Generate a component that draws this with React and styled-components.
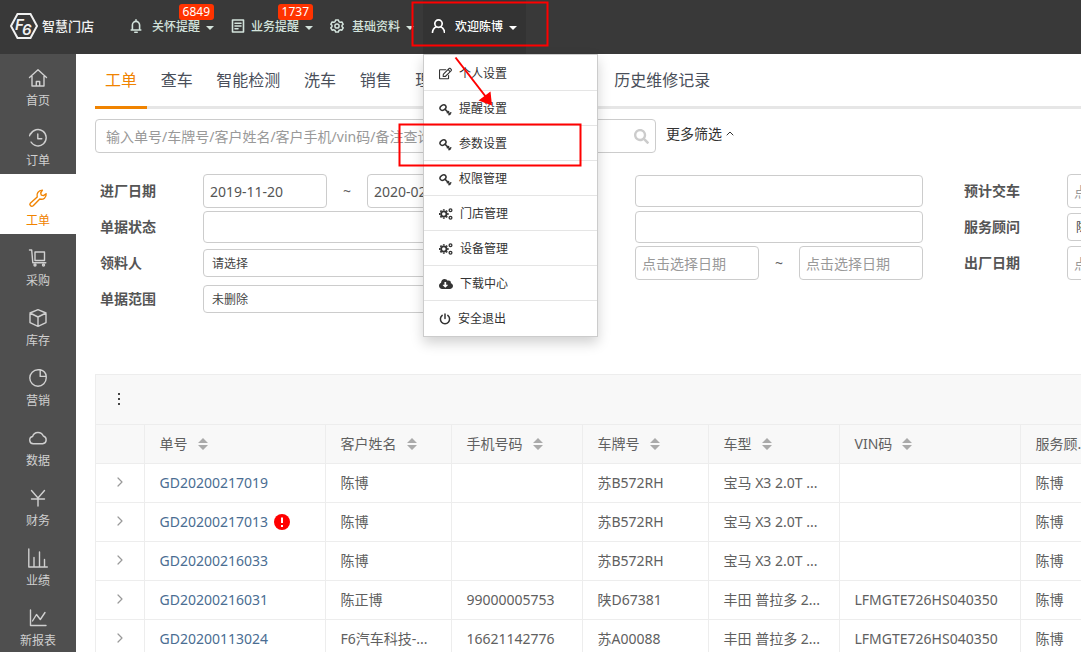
import React from 'react';
import styled, { createGlobalStyle } from 'styled-components';
import { FaRegEdit, FaCloudDownloadAlt, FaSearch } from 'react-icons/fa';

const GlobalStyle = createGlobalStyle`
  * {
    box-sizing: border-box;
  }

  body {
    margin: 0;
    background: #fff;
    color: #606060;
    font-family: 'Noto Sans', 'Noto Sans CJK SC', sans-serif;
    font-size: 14px;
    line-height: 20px;
  }

  button, input, select {
    font-family: inherit;
  }

  a {
    color: inherit;
    text-decoration: none;
  }
`;

const Page = styled.div`
  position: relative;
  display: flex;
  flex-direction: column;
  height: 100vh;
  overflow: hidden;
`;

/* ---------- top bar ---------- */

const TopBar = styled.header`
  flex: none;
  display: flex;
  height: 54px;
  background: #393939;
`;

const Brand = styled.a`
  display: flex;
  align-items: center;
  gap: 4px;
  width: 122px;
  height: 51px;
  padding-left: 10px;
  color: #f2f2f2;
  font-size: 13px;
  font-weight: 500;
`;

const TopNav = styled.nav`
  display: flex;
`;

const NavItem = styled.div`
  position: relative;
  background: ${({ $open }) => ($open ? '#333' : 'transparent')};
`;

const NavButton = styled.button`
  display: flex;
  align-items: center;
  height: 54px;
  padding: 0 9px 0 8px;
  border: 0;
  background: none;
  color: ${({ $open }) => ($open ? '#fff' : '#d3e3dc')};
  font-size: 12px;
  font-weight: 500;
  line-height: 20px;
  white-space: nowrap;
`;

const NavIcon = styled.span`
  display: flex;
  width: ${({ $width }) => $width}px;
  padding-bottom: 3px;
`;

const Caret = styled.span`
  margin-top: 2px;
  margin-left: 6px;
  border: 4px solid transparent;
  border-top-color: currentColor;
  border-bottom: 0;
`;

const Badge = styled.span`
  position: absolute;
  top: 4px;
  right: 9px;
  padding: 0 4px;
  border-radius: 3px;
  background: #f30;
  color: #fff;
  font-size: 12px;
  line-height: 16px;
`;

const Menu = styled.ul`
  position: absolute;
  z-index: 10;
  top: 54px;
  left: 0;
  width: 175px;
  margin: 0;
  padding: 0 0 1px;
  border: 1px solid #ccc;
  background: #fff;
  box-shadow: 0 6px 12px rgba(0, 0, 0, 0.18);
  list-style: none;
`;

const MenuItem = styled.li`
  height: 35px;

  & + & {
    border-top: 1px solid #e5e5e5;
  }
`;

const MenuLink = styled.a`
  display: flex;
  align-items: center;
  gap: 7px;
  height: 100%;
  padding-top: 2px;
  padding-left: 15px;
  color: #333;
  font-size: 12px;
`;

/* ---------- side bar ---------- */

const Body = styled.div`
  flex: 1;
  display: flex;
  min-height: 0;
`;

const Sidebar = styled.nav`
  flex: none;
  width: 76px;
  overflow: hidden;
  background: #4f4f4f;
`;

const SideLink = styled.a`
  display: flex;
  flex-direction: column;
  align-items: center;
  gap: 3px;
  height: 60px;
  padding-top: 14px;
  background: ${({ $active }) => ($active ? '#fff' : 'transparent')};
  color: ${({ $active }) => ($active ? '#f08300' : '#d0d0d0')};
  font-size: 12px;
`;

/* ---------- content ---------- */

const Main = styled.main`
  flex: 1;
  min-width: 0;
  padding-left: 19px;
  overflow: hidden;
`;

const Tabs = styled.nav`
  height: 55px;
  border-bottom: 3px solid #e6e6e6;
  white-space: nowrap;
`;

const Tab = styled.a`
  display: inline-block;
  height: 55px;
  padding: 0 10px;
  border-bottom: 3px solid ${({ $active }) => ($active ? '#f08300' : 'transparent')};
  color: ${({ $active }) => ($active ? '#f08300' : '#4a4f5a')};
  font-size: 16px;
  line-height: 52px;
`;

const SearchRow = styled.div`
  display: flex;
  gap: 10px;
  margin-top: 10px;
`;

const SearchBox = styled.form`
  display: flex;
  align-items: center;
  width: 561px;
  height: 34px;
  padding: 0 6px 0 10px;
  border: 1px solid #ccc;
  border-radius: 4px;
`;

const SearchInput = styled.input`
  flex: 1;
  min-width: 0;
  padding: 0;
  border: 0;
  outline: 0;
  font-size: 14px;

  &::placeholder {
    color: #999;
  }
`;

const IconButton = styled.button`
  display: inline-flex;
  align-items: center;
  justify-content: center;
  padding: 0;
  border: 0;
  background: none;
  color: ${({ $color }) => $color};
`;

const MoreButton = styled.button`
  display: flex;
  align-items: center;
  gap: 4px;
  height: 28px;
  padding: 0;
  border: 0;
  background: none;
  color: #333;
  font-size: 14px;
`;

const Filters = styled.form`
  display: grid;
  grid-template-columns: repeat(3, 432px);
  grid-auto-rows: 36px;
  margin-top: 20px;
  padding-left: 5px;
`;

const Field = styled.div`
  grid-column: ${({ $column }) => $column};
  display: flex;
  align-items: center;
`;

const FieldLabel = styled.label`
  width: 103px;
  color: #555;
  font-weight: 700;
`;

const Control = styled.div`
  display: flex;
  align-items: center;
  justify-content: space-between;
  width: 288px;
`;

const TextInput = styled.input`
  width: 100%;
  height: 32px;
  padding: 0 6px;
  border: 1px solid #ccc;
  border-radius: 4px;
  color: #555;
  font-size: 14px;

  &::placeholder {
    color: #999;
  }
`;

const DateInput = styled(TextInput)`
  width: 124px;
  height: 34px;
`;

const Select = styled.select`
  appearance: none;
  width: 100%;
  height: 28px;
  padding: 0 8px;
  border: 1px solid #ccc;
  border-radius: 4px;
  background: #fff;
  color: #444;
  font-size: 12px;
`;

const Panel = styled.section`
  margin-top: 57px;
  border: 1px solid #ededed;
  border-right: 0;
`;

const PanelBar = styled.div`
  display: flex;
  align-items: center;
  height: 49px;
  padding-left: 15px;
  background: #f8f8f8;
`;

const Table = styled.table`
  width: 1050px;
  table-layout: fixed;
  border-collapse: collapse;
`;

const cell = `
  height: 39px;
  padding: 0 0 0 15px;
  border-top: 1px solid #ededed;
  border-left: 1px solid #ededed;
  text-align: left;
  font-weight: 400;
  white-space: nowrap;

  &:first-child {
    padding: 0;
    border-left: 0;
    text-align: center;
  }
`;

const Th = styled.th`
  ${cell}
  background: #f8f8f8;
  color: #606060;
`;

const Td = styled.td`
  ${cell}
`;

const CellInner = styled.span`
  display: flex;
  align-items: center;
  gap: ${({ $gap }) => $gap}px;
`;

const OrderLink = styled.a`
  color: #4a6d92;
`;

const Marks = styled.svg`
  position: absolute;
  z-index: 20;
  top: 0;
  left: 0;
  pointer-events: none;
`;

/* ---------- icons ---------- */

const Line = ({ size = 20, width = 1.4, view = 20, children }) => (
  <svg
    width={size}
    height={size}
    viewBox={`0 0 ${view} ${view}`}
    fill="none"
    stroke="currentColor"
    strokeWidth={width}
    strokeLinecap="round"
    strokeLinejoin="round"
    aria-hidden="true"
  >
    {children}
  </svg>
);

const BellIcon = () => (
  <Line size={14} view={14} width={1.6}>
    <path d="M1.2 11h9.6M2.4 11V6a3.6 3.6 0 0 1 7.2 0v5M6 .8v1.4M4.8 13.2h2.4" />
  </Line>
);

const NoteIcon = () => (
  <Line size={14} view={14} width={1.6}>
    <path d="M1.500 1h11v12h-11zM4 4.200h6M4 7h6M4 9.800h3" />
  </Line>
);

const GearIcon = () => (
  <Line size={14} view={14} width={1.5}>
    <path d="M5.6.9h2.8l.5 1.7 1.2.7 1.8-.4 1.3 2.4L12 6.4v1.2l1.2 1.2-1.3 2.4-1.8-.4-1.2.7-.5 1.6H5.6l-.5-1.6-1.2-.7-1.8.4L.8 8.800 2 7.600V6.400L.8 5.300l1.300-2.400 1.800.4 1.200-.7z" />
    <circle cx="7" cy="7" r="2.1" />
  </Line>
);

const UserIcon = () => (
  <Line size={14} view={14} width={1.7}>
    <circle cx="7.500" cy="4.600" r="3.700" />
    <path d="M5.400 7.800c-2.300 1-3.700 2.800-3.900 5.500M9.600 7.800c2.300 1 3.700 2.800 3.900 5.500" />
  </Line>
);

const EditIcon = () => <FaRegEdit size={13} />;

const KeyIcon = () => (
  <Line size={13} view={13} width={1.5}>
    <ellipse cx="4" cy="4.6" rx="3.2" ry="2.4" transform="rotate(-35 4 4.6)" />
    <path d="M6.2 6.400 11 11.200M8.300 9.800l1.300-1.300M10 11.600l1.800-1.800" />
  </Line>
);

const CogsIcon = () => (
  <Line size={14} view={14} width={1.8}>
    <circle cx="4.800" cy="7" r="2.700" />
    <path
      d="M4.800 2.200v1.400M4.800 10.400v1.400M0 7h1.400M8.200 7h1.400M1.400 3.600l1 1M7.200 9.400l1 1M8.200 3.600l-1 1M2.400 9.400l-1 1"
      strokeLinecap="butt"
    />
    <circle cx="11.500" cy="3.200" r="1.400" strokeWidth="1.300" />
    <circle cx="11.500" cy="10.800" r="1.400" strokeWidth="1.300" />
  </Line>
);

const DownloadIcon = () => <FaCloudDownloadAlt size={14} />;

const PowerIcon = () => (
  <Line size={12} view={12} width={1.5}>
    <path d="M6 1v4.500M3.200 2.400a4.600 4.600 0 1 0 5.600 0" />
  </Line>
);

const sideIcons = {
  home: <path d="M1.5 9.5 10 1.8l8.5 7.7M4 8v10h12V8M8.3 18v-4.5h3.4V18" />,
  clock: <path d="M2.6 6.2A8.2 8.2 0 1 1 3 14M1.6 7.8l.8-2.4M9.8 6v4.8h4" />,
  wrench: <path d="M2.3 15.2 9.2 8.9C8.3 5.5 10.3 2.3 14.4 2.1L12.7 4.9l.6 2.2 2.2.5 2.6-1.9c.5 3.9-2.7 6.3-6.3 5.3l-6.600 6.800c-1.900 1.400-4.300-.7-2.900-2.600z" />,
  cart: (
    <>
      <path d="M1.5 2h2.2l1.1 12.8h13M7 4h9.5v8.5H7z" />
      <circle cx="7" cy="17" r="1" />
      <circle cx="15.5" cy="17" r="1" />
    </>
  ),
  box: <path d="M10 1.6 18 5v9.6l-8 3.8-8-3.8V5zM2 5l8 4 8-4M10 9v9.4" />,
  pie: <path d="M10 1.8a8.2 8.2 0 1 0 8.2 8.2M12.2 1.800a7.500 7.500 0 0 1 6 6.600h-6zM10 1.800h2.200M18.200 8.400V10" />,
  cloud: <path d="M5.2 15.8a3.7 3.7 0 0 1-.6-7.3A5.7 5.7 0 0 1 15.3 8a4 4 0 0 1-.6 7.8z" />,
  yuan: <path d="M3.5 2.5 10 10l6.5-7.5M3.5 11h13M10 10v8" />,
  bars: <path d="M.8 1v18h18.5M6 18.5v-9M11.5 18.5V4M16.5 18.5v-7" />,
  chart: <path d="M2.5 2v15.5H18M4.5 13l4-6.5 3.8 5 4.7-7" />,
};

const Sorter = () => (
  <svg width="10" height="12" viewBox="0 0 10 12" fill="#aaa" aria-hidden="true">
    <path d="M5 0l5 5H0zM5 12l5-5H0z" />
  </svg>
);

const AlertIcon = () => (
  <svg width="16" height="16" viewBox="0 0 16 16" role="img" aria-label="异常">
    <circle cx="8" cy="8" r="8" fill="#f00" />
    <path d="M8 3.5v5.500M8 11v2" stroke="#fff" strokeWidth="2" />
  </svg>
);

/* ---------- data ---------- */

const navItems = [
  { label: '关怀提醒', icon: <BellIcon />, width: 22, badge: 6849 },
  { label: '业务提醒', icon: <NoteIcon />, width: 20, badge: 1737 },
  { label: '基础资料', icon: <GearIcon />, width: 22 },
  { label: '欢迎陈博', icon: <UserIcon />, width: 24, open: true },
];

const menuItems = [
  ['个人设置', EditIcon],
  ['提醒设置', KeyIcon],
  ['参数设置', KeyIcon],
  ['权限管理', KeyIcon],
  ['门店管理', CogsIcon],
  ['设备管理', CogsIcon],
  ['下载中心', DownloadIcon],
  ['安全退出', PowerIcon],
];

const sideItems = [
  ['首页', 'home'],
  ['订单', 'clock'],
  ['工单', 'wrench'],
  ['采购', 'cart'],
  ['库存', 'box'],
  ['营销', 'pie'],
  ['数据', 'cloud'],
  ['财务', 'yuan'],
  ['业绩', 'bars'],
  ['新报表', 'chart'],
];

const tabs = ['工单', '查车', '智能检测', '洗车', '销售', '理赔', '会员', '服务套餐', '历史维修记录'];

const filters = [
  { label: '进厂日期', type: 'dates', values: ['2019-11-20', '2020-02-18'] },
  { label: '工单类型', type: 'text' },
  { label: '预计交车', type: 'dates' },
  { label: '单据状态', type: 'text' },
  { label: '业务分类', type: 'text' },
  { label: '服务顾问', type: 'select', value: '陈博' },
  { label: '领料人', type: 'select', value: '请选择' },
  { label: '结算日期', type: 'dates' },
  { label: '出厂日期', type: 'dates' },
  { label: '单据范围', type: 'select', value: '未删除' },
];

const columns = [
  ['单号', 181],
  ['客户姓名', 126],
  ['手机号码', 131],
  ['车牌号', 126],
  ['车型', 131],
  ['VIN码', 181],
  ['服务顾...', 126],
];

const orders = [
  ['GD20200217019', '陈博', '', '苏B572RH', '宝马 X3 2.0T ...', '', '陈博'],
  ['GD20200217013', '陈博', '', '苏B572RH', '宝马 X3 2.0T ...', '', '陈博'],
  ['GD20200216033', '陈博', '', '苏B572RH', '宝马 X3 2.0T ...', '', '陈博'],
  ['GD20200216031', '陈正博', '99000005753', '陕D67381', '丰田 普拉多 2...', 'LFMGTE726HS040350', '陈博'],
  ['GD20200113024', 'F6汽车科技-...', '16621142776', '苏A00088', '丰田 普拉多 2...', 'LFMGTE726HS040350', '陈博'],
];

const alerted = ['GD20200217013'];

const FilterField = ({ id, label, type, value, values = [], column }) => (
  <Field $column={column}>
    <FieldLabel htmlFor={id}>{label}</FieldLabel>
    <Control>
      {type === 'dates' && (
        <>
          <DateInput id={id} placeholder="点击选择日期" defaultValue={values[0]} />
          <span>~</span>
          <DateInput aria-label={`${label}止`} placeholder="点击选择日期" defaultValue={values[1]} />
        </>
      )}
      {type === 'text' && <TextInput id={id} />}
      {type === 'select' && (
        <Select id={id}>
          <option>{value}</option>
        </Select>
      )}
    </Control>
  </Field>
);

const App = () => {
  return (
    <Page>
      <GlobalStyle />
      <TopBar>
        <Brand href="#">
          <svg width="28" height="26" viewBox="0 0 28 26" aria-hidden="true">
            <path d="M7.5 1h13L27 13l-6.500 12h-13L1 13z" fill="none" stroke="#f2f2f2" strokeWidth="2" />
            <g fill="#f2f2f2" fontFamily="Inter, sans-serif" fontSize="15" fontStyle="italic" fontWeight="600">
              <text x="5" y="17">F</text>
              <text x="12" y="22">6</text>
            </g>
          </svg>
          智慧门店
        </Brand>
        <TopNav>
          {navItems.map((item) => (
            <NavItem key={item.label} $open={item.open}>
              <NavButton type="button" $open={item.open}>
                <NavIcon $width={item.width}>{item.icon}</NavIcon>
                {item.label}
                <Caret />
              </NavButton>
              {item.badge && <Badge>{item.badge}</Badge>}
              {item.open && (
                <Menu>
                  {menuItems.map(([label, Icon]) => (
                    <MenuItem key={label}>
                      <MenuLink href="#"><Icon />{label}</MenuLink>
                    </MenuItem>
                  ))}
                </Menu>
              )}
            </NavItem>
          ))}
        </TopNav>
      </TopBar>

      <Body>
        <Sidebar>
          {sideItems.map(([label, icon]) => (
            <SideLink key={label} href="#" $active={label === '工单'}>
              <Line>{sideIcons[icon]}</Line>
              {label}
            </SideLink>
          ))}
        </Sidebar>

        <Main>
          <Tabs>
            {tabs.map((tab) => (
              <React.Fragment key={tab}>
                <Tab href="#" $active={tab === '工单'}>{tab}</Tab>{' '}
              </React.Fragment>
            ))}
          </Tabs>

          <SearchRow>
            <SearchBox>
              <SearchInput aria-label="搜索" placeholder="输入单号/车牌号/客户姓名/客户手机/vin码/备注查询" />
              <IconButton type="button" aria-label="搜索" $color="#ccc"><FaSearch size={15} /></IconButton>
            </SearchBox>
            <MoreButton type="button">
              更多筛选
              <Line size={8} view={8} width={1}><path d="M1 6l3-3 3 3" /></Line>
            </MoreButton>
          </SearchRow>

          <Filters>
            {filters.map((field, i) => (
              <FilterField key={field.label} id={`filter-${i}`} column={(i % 3) + 1} {...field} />
            ))}
          </Filters>

          <Panel>
            <PanelBar>
              <IconButton type="button" aria-label="更多" $color="#444">
                <svg width="16" height="16" viewBox="0 0 16 16" fill="currentColor">
                  <path d="M7 1h2v2H7zM7 6h2v2H7zM7 11h2v2H7z" />
                </svg>
              </IconButton>
            </PanelBar>
            <Table>
              <colgroup>
                <col width="48" />
                {columns.map(([name, width]) => <col key={name} width={width} />)}
              </colgroup>
              <thead>
                <tr>
                  <Th aria-label="展开" />
                  {columns.map(([name]) => (
                    <Th key={name}>
                      <CellInner $gap={10}>{name}<Sorter /></CellInner>
                    </Th>
                  ))}
                </tr>
              </thead>
              <tbody>
                {orders.map((order) => (
                  <tr key={order[0]}>
                    <Td>
                      <IconButton type="button" aria-label="展开" $color="#999">
                        <Line size={12} view={12} width={1.2}><path d="M4 2l4 4-4 4" /></Line>
                      </IconButton>
                    </Td>
                    {order.map((text, i) => (
                      <Td key={columns[i][0]}>
                        {i === 0 ? (
                          <CellInner $gap={6}>
                            <OrderLink href="#">{text}</OrderLink>
                            {alerted.includes(text) && <AlertIcon />}
                          </CellInner>
                        ) : text}
                      </Td>
                    ))}
                  </tr>
                ))}
              </tbody>
            </Table>
          </Panel>
        </Main>
      </Body>

      <Marks width="600" height="180" fill="none" stroke="#f00" strokeWidth="2" aria-hidden="true">
        <path d="M412.5 2.5h135v43h-135zM399.5 124.5h181v41h-181z" />
        <path d="M455.5 57.5 486 97" />
        <path d="M492 105.5 478.5 100.5 490.5 91.500z" fill="#f00" stroke="none" />
      </Marks>
    </Page>
  );
};

export default App;
